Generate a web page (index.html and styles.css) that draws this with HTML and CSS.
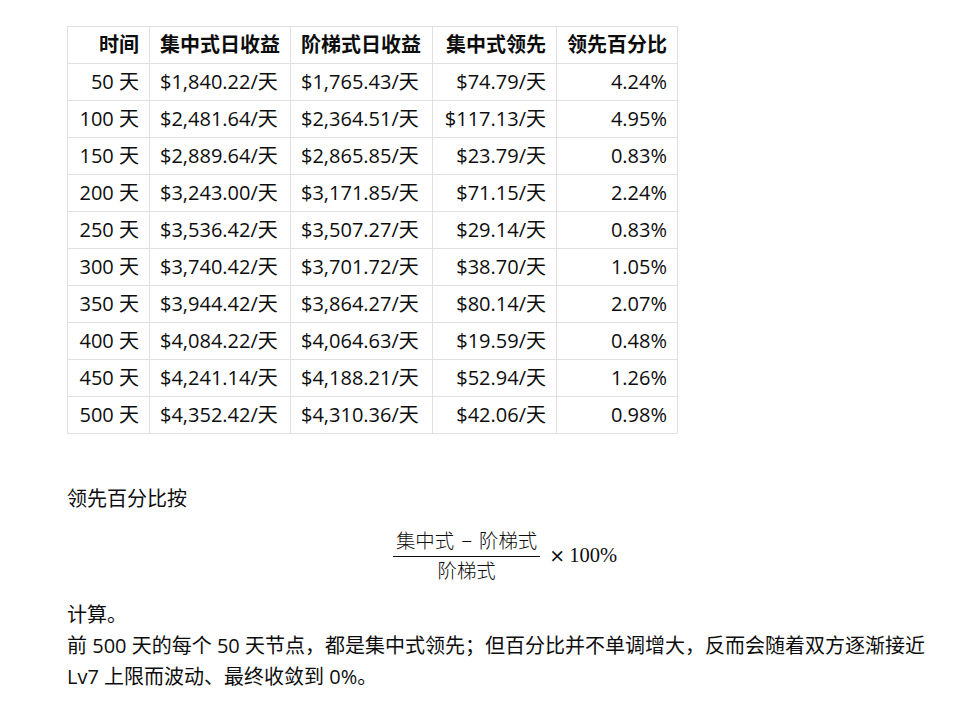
FILE: index.html
```html
<!DOCTYPE html>
<html lang="zh-CN">
<head>
<meta charset="utf-8">
<title>集中式与阶梯式收益对比</title>
<link rel="stylesheet" href="styles.css">
</head>
<body>
<main class="content">
  <table class="data">
    <colgroup>
      <col class="c1"><col class="c2"><col class="c3"><col class="c4"><col class="c5">
    </colgroup>
    <thead>
      <tr><th class="r">时间</th><th>集中式日收益</th><th>阶梯式日收益</th><th class="r">集中式领先</th><th class="r">领先百分比</th></tr>
    </thead>
    <tbody>
      <tr><td class="r">50 天</td><td>$1,840.22/天</td><td>$1,765.43/天</td><td class="r">$74.79/天</td><td class="r">4.24%</td></tr>
      <tr><td class="r">100 天</td><td>$2,481.64/天</td><td>$2,364.51/天</td><td class="r">$117.13/天</td><td class="r">4.95%</td></tr>
      <tr><td class="r">150 天</td><td>$2,889.64/天</td><td>$2,865.85/天</td><td class="r">$23.79/天</td><td class="r">0.83%</td></tr>
      <tr><td class="r">200 天</td><td>$3,243.00/天</td><td>$3,171.85/天</td><td class="r">$71.15/天</td><td class="r">2.24%</td></tr>
      <tr><td class="r">250 天</td><td>$3,536.42/天</td><td>$3,507.27/天</td><td class="r">$29.14/天</td><td class="r">0.83%</td></tr>
      <tr><td class="r">300 天</td><td>$3,740.42/天</td><td>$3,701.72/天</td><td class="r">$38.70/天</td><td class="r">1.05%</td></tr>
      <tr><td class="r">350 天</td><td>$3,944.42/天</td><td>$3,864.27/天</td><td class="r">$80.14/天</td><td class="r">2.07%</td></tr>
      <tr><td class="r">400 天</td><td>$4,084.22/天</td><td>$4,064.63/天</td><td class="r">$19.59/天</td><td class="r">0.48%</td></tr>
      <tr><td class="r">450 天</td><td>$4,241.14/天</td><td>$4,188.21/天</td><td class="r">$52.94/天</td><td class="r">1.26%</td></tr>
      <tr><td class="r">500 天</td><td>$4,352.42/天</td><td>$4,310.36/天</td><td class="r">$42.06/天</td><td class="r">0.98%</td></tr>
    </tbody>
  </table>

  <p class="para lead">领先百分比按</p>
  <div class="math">
    <span class="frac">
      <span class="num">集中式<span class="minus">−</span>阶梯式</span>
      <span class="den">阶梯式</span>
    </span>
    <span class="times">×</span><span class="mnum">100%</span>
  </div>
  <p class="para">计算。</p>
  <p class="para">前 500 天的每个 50 天节点，都是集中式领先；但百分比并不单调增大，反而会随着双方逐渐接近 Lv7 上限而波动、最终收敛到 0%。</p>
</main>
</body>
</html>
```

FILE: styles.css
```css
html, body {
  margin: 0;
  padding: 0;
  background: #ffffff;
}

body {
  font-family: "Open Sans", "Noto Sans CJK SC", sans-serif;
  font-size: 20px;
  color: #0d0d0d;
}

.content {
  width: 876px;
  padding: 26px 0 0 67px;
}

.data {
  border-collapse: collapse;
  table-layout: fixed;
  width: 610px;
}

.c1 { width: 82px; }
.c2 { width: 141px; }
.c3 { width: 142px; }
.c4 { width: 124px; }
.c5 { width: 121px; }

.data th,
.data td {
  border: 1px solid #e0e0e0;
  padding: 5px 10px;
  line-height: 26px;
  text-align: left;
  white-space: nowrap;
}

.data th {
  font-weight: 700;
}

.data .r {
  text-align: right;
}

.para {
  margin: 0;
  line-height: 31px;
}

.lead {
  margin-top: 49px;
}

.math {
  display: flex;
  justify-content: center;
  align-items: center;
  margin: 14px 0 17px;
  font-family: "Liberation Serif", "Noto Sans CJK SC", serif;
  font-size: 20px;
}

.frac {
  display: inline-flex;
  flex-direction: column;
  align-items: center;
}

.num,
.den {
  font-family: "Noto Sans CJK SC", sans-serif;
  font-size: 19.4px;
  font-weight: 300;
  line-height: 24px;
  padding: 0 3px;
}

.num {
  padding-bottom: 2px;
  border-bottom: 1px solid #0d0d0d;
}

.den {
  padding-top: 1px;
}

.minus {
  font-family: "Liberation Serif", serif;
  margin: 0 7px;
}

.times {
  font-family: "DejaVu Serif", serif;
  font-size: 19px;
  margin: 0 4px 0 9px;
}

.mnum {
  font-size: 20.5px;
}
```
